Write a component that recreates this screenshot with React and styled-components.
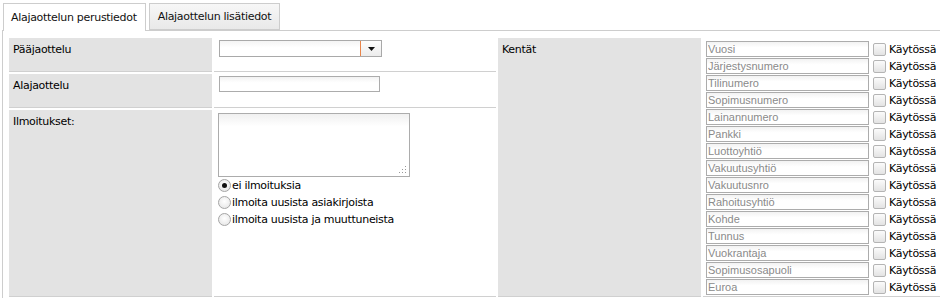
import React from "react";
import styled, { createGlobalStyle } from "styled-components";

const Global = createGlobalStyle`
  html, body { margin: 0; padding: 0; background: #fff; }
  body { font-family: "DejaVu Sans", Verdana, sans-serif; font-size: 11px; color: #000; }
  * { box-sizing: border-box; }
`;

const Page = styled.div`
  width: 940px;
  height: 298px;
  overflow: hidden;
  padding-top: 3px;
`;

const TabBar = styled.div`
  display: flex;
  align-items: flex-start;
  gap: 3px;
  padding-left: 3px;
  height: 27px;
`;

const Tab = styled.div`
  position: relative;
  z-index: 1;
  height: ${(p) => (p.$active ? "28px" : "27px")};
  padding-left: ${(p) => (p.$active ? "7px" : "8px")};
  padding-right: 8px;
  border: 1px solid #cdcdcd;
  border-bottom: ${(p) => (p.$active ? "none" : "1px solid #cdcdcd")};
  background: ${(p) =>
    p.$active ? "#fff" : "linear-gradient(#f7f7f7, #e9e9e9)"};
  display: flex;
  align-items: center;
  font-size: 11px;
  letter-spacing: -0.3px;
  color: #111;
  white-space: nowrap;
`;

const Panel = styled.div`
  margin-left: 2px;
  border-left: 1px solid #cdcdcd;
  border-top: 1px solid #cdcdcd;
  padding: 7px 0 0 6px;
  height: 300px;
`;

const Grid = styled.div`
  display: grid;
  grid-template-columns: 203px 282px 203px 1fr;
  grid-template-rows: 34px 34px 187px;
  column-gap: 2px;
  row-gap: 2px;
`;

const Label = styled.div`
  background: #e3e3e3;
  border-bottom: 1px solid #d0d0d0;
  padding: 5px 4px 0 4px;
  font-size: 11px;
  letter-spacing: -0.3px;
  line-height: 13px;
  grid-row: ${(p) => p.$row || "auto"};
  grid-column: ${(p) => p.$col || "auto"};
`;

const Cell = styled.div`
  border-bottom: 1px solid #d0d0d0;
  padding: ${(p) => p.$pad || "2px 5px 0"};
  grid-row: ${(p) => p.$row || "auto"};
  grid-column: ${(p) => p.$col || "auto"};
`;

const SelectBox = styled.div`
  display: flex;
  width: 163px;
  height: 17px;
  border: 1px solid #a9a9a9;
  background: linear-gradient(#f4f4f4, #fff 45%);
`;

const SelectText = styled.div`
  flex: 1;
  border-right: 1px solid #e8844a;
`;

const SelectArrow = styled.div`
  width: 20px;
  display: flex;
  align-items: center;
  justify-content: center;
  background: linear-gradient(#fdfdfd, #ececec);
`;

const TextInput = styled.input`
  display: block;
  width: ${(p) => p.$w || "161px"};
  height: 16px;
  margin: 0;
  padding: 0 1px;
  border: 1px solid #acacac;
  background: linear-gradient(#f2f2f2, #fff 40%);
  font-family: "Liberation Sans", Arial, sans-serif;
  font-size: 11px;
  color: #888;
  outline: none;
  &::placeholder { color: #8a8a8a; opacity: 1; }
`;

const AreaWrap = styled.div`
  position: relative;
  width: 192px;
  height: 64px;
  margin-left: -1px;
  margin-top: 1px;
`;

const Area = styled.textarea`
  display: block;
  width: 192px;
  height: 64px;
  margin: 0;
  border: 1px solid #acacac;
  background: linear-gradient(#f0f0f0, #fff 20%);
  resize: none;
  outline: none;
`;

const Grip = styled.svg`
  position: absolute;
  right: 3px;
  bottom: 3px;
`;

const RadioList = styled.div`
  display: flex;
  flex-direction: column;
  margin-left: -1px;
`;

const RadioRow = styled.label`
  display: flex;
  align-items: center;
  height: 17px;
  font-size: 11px;
  letter-spacing: -0.3px;
  color: #000;
`;

const Radio = styled.input.attrs({ type: "radio" })`
  appearance: none;
  width: 13px;
  height: 13px;
  margin: 0 1px 0 0;
  border-radius: 50%;
  border: 1px solid #a5a5a5;
  background: radial-gradient(circle at 50% 40%, #fff, #e2e2e2);
  position: relative;
  &:checked::after {
    content: "";
    position: absolute;
    left: 3px;
    top: 3px;
    width: 5px;
    height: 5px;
    border-radius: 50%;
    background: #111;
  }
`;

const FieldList = styled.div`
  display: flex;
  flex-direction: column;
  gap: 1px;
`;

const FieldRow = styled.div`
  display: flex;
  align-items: center;
  height: 16px;
`;

const Check = styled.input.attrs({ type: "checkbox" })`
  appearance: none;
  width: 13px;
  height: 13px;
  margin: 0 3px 0 4px;
  border: 1px solid #b4b4b4;
  border-radius: 2px;
  background: linear-gradient(#fbfbfb, #e3e3e3);
`;

const CheckText = styled.span`
  font-size: 11px;
  letter-spacing: -0.3px;
  color: #000;
`;

const fields = [
  "Vuosi",
  "Järjestysnumero",
  "Tilinumero",
  "Sopimusnumero",
  "Lainannumero",
  "Pankki",
  "Luottoyhtiö",
  "Vakuutusyhtiö",
  "Vakuutusnro",
  "Rahoitusyhtiö",
  "Kohde",
  "Tunnus",
  "Vuokrantaja",
  "Sopimusosapuoli",
  "Euroa",
];

export default function App() {
  return (
    <Page>
      <Global />
      <TabBar>
        <Tab $active>Alajaottelun perustiedot</Tab>
        <Tab>Alajaottelun lisätiedot</Tab>
      </TabBar>
      <Panel>
        <Grid>
          <Label $row="1" $col="1">Pääjaottelu</Label>
          <Cell $row="1" $col="2">
            <SelectBox>
              <SelectText />
              <SelectArrow>
                <svg width="7" height="4" viewBox="0 0 7 4">
                  <path d="M0 0h7L3.5 4z" fill="#111" />
                </svg>
              </SelectArrow>
            </SelectBox>
          </Cell>
          <Label $row="1 / span 3" $col="3">Kentät</Label>
          <Cell $row="1 / span 3" $col="4" $pad="3px 0 0 3px">
            <FieldList>
              {fields.map((f) => (
                <FieldRow key={f}>
                  <TextInput $w="163px" placeholder={f} />
                  <Check />
                  <CheckText>Käytössä</CheckText>
                </FieldRow>
              ))}
            </FieldList>
          </Cell>
          <Label $row="2" $col="1">Alajaottelu</Label>
          <Cell $row="2" $col="2">
            <TextInput />
          </Cell>
          <Label $row="3" $col="1">Ilmoitukset:</Label>
          <Cell $row="3" $col="2" $pad="2px 5px 0">
            <AreaWrap>
              <Area />
              <Grip width="8" height="8" viewBox="0 0 8 8">
                <rect x="6" y="0" width="1" height="1" fill="#999" />
                <rect x="3" y="3" width="1" height="1" fill="#999" />
                <rect x="6" y="3" width="1" height="1" fill="#999" />
                <rect x="0" y="6" width="1" height="1" fill="#999" />
                <rect x="3" y="6" width="1" height="1" fill="#999" />
                <rect x="6" y="6" width="1" height="1" fill="#999" />
              </Grip>
            </AreaWrap>
            <RadioList>
              <RadioRow>
                <Radio name="ilm" defaultChecked />
                ei ilmoituksia
              </RadioRow>
              <RadioRow>
                <Radio name="ilm" />
                ilmoita uusista asiakirjoista
              </RadioRow>
              <RadioRow>
                <Radio name="ilm" />
                ilmoita uusista ja muuttuneista
              </RadioRow>
            </RadioList>
          </Cell>
        </Grid>
      </Panel>
    </Page>
  );
}
